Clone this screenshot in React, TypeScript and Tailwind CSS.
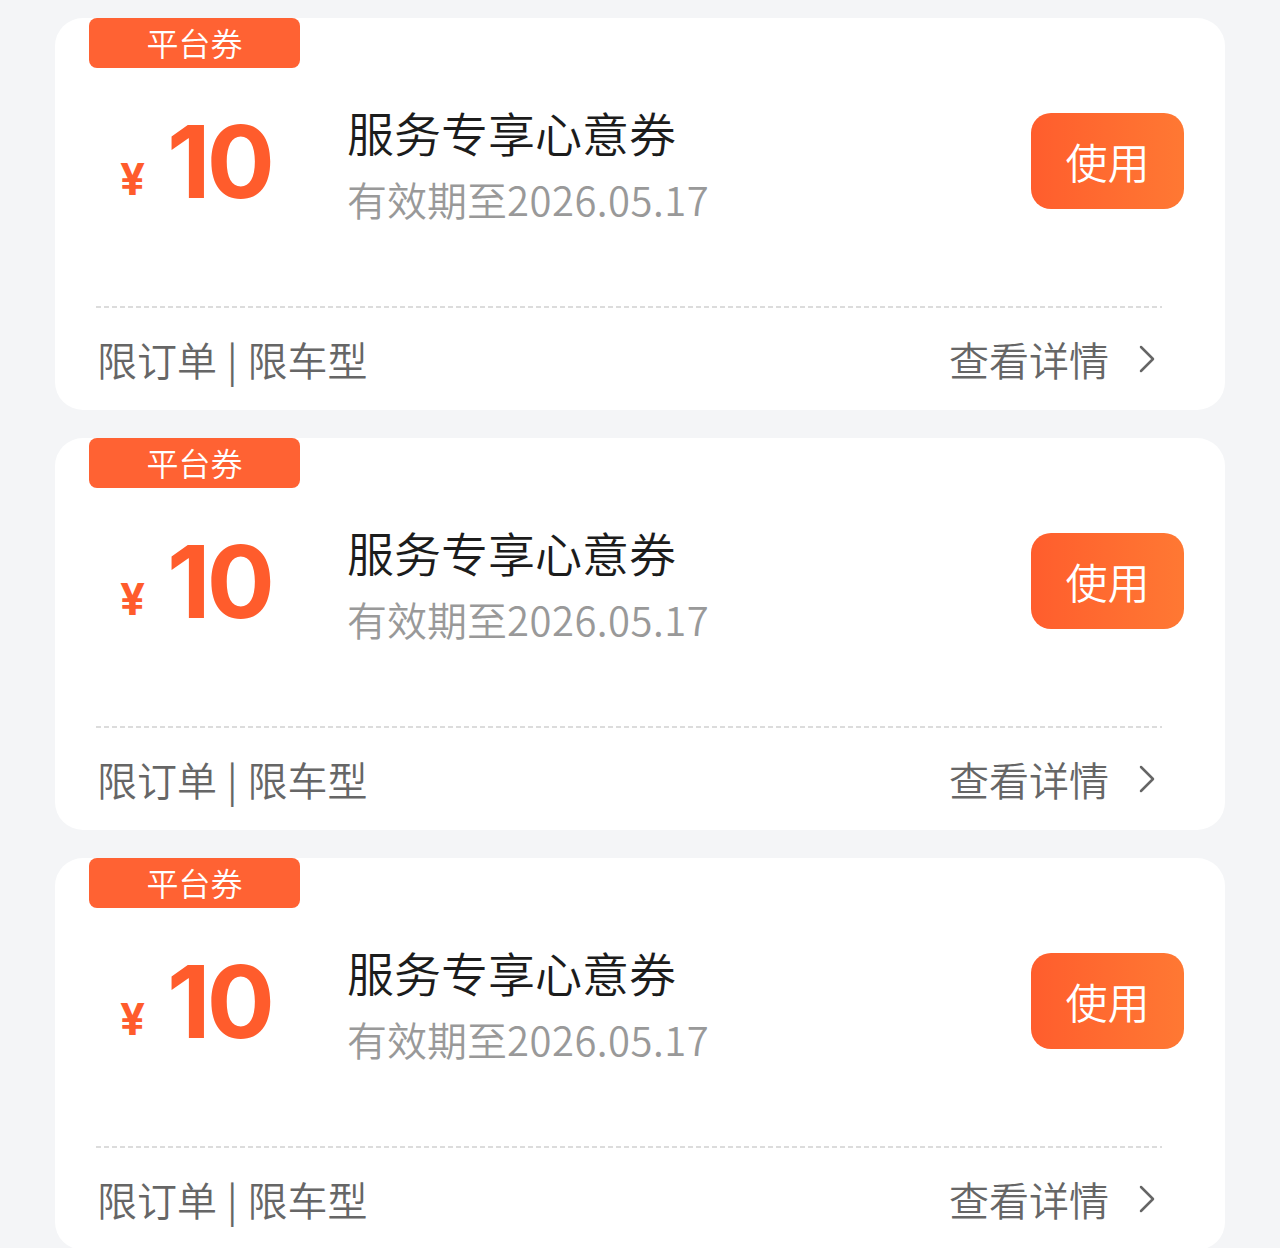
import React from "react";

const cjk = { fontFamily: '"Noto Sans CJK SC", "Noto Sans", sans-serif' };

function Coupon() {
  return (
    <div className="relative h-[392px] w-full shrink-0 rounded-[28px] bg-white" style={cjk}>
      <div className="ml-[34px] flex h-[50px] w-[211px] items-center justify-center rounded-[8px] bg-[#ff6233] pb-[2px] text-[32px] font-[350] leading-none text-white">
        平台券
      </div>
      <div className="flex h-[238px] items-start">
        <div className="ml-[65px] mt-[43px] flex w-[227px] items-baseline">
          <span
            className="relative bottom-[3px] text-[44px] font-bold leading-none text-[#ff5c2c]"
            style={{ fontFamily: '"Inter", "Liberation Sans", sans-serif' }}
          >
            ¥
          </span>
          <span
            className="ml-[22px] text-[101px] font-bold leading-none tracking-[-4px] text-[#ff5c2c]"
            style={{ fontFamily: '"Inter", "Liberation Sans", sans-serif' }}
          >
            10
          </span>
        </div>
        <div className="mt-[40px] flex flex-col">
          <div className="text-[47px] font-[350] leading-none text-[#1c1c1c]">服务专享心意券</div>
          <div className="mt-[24px] text-[40px] font-[350] leading-none text-[#999999]">
            有效期至<span className="tracking-[0.5px]">2026.05.17</span>
          </div>
        </div>
        <button className="ml-auto mr-[41px] mt-[45px] flex h-[96px] w-[153px] items-center justify-center rounded-[20px] bg-gradient-to-r from-[#ff5d2d] to-[#ff7833] text-[42px] font-[350] leading-none text-white">
          使用
        </button>
      </div>
      <div className="ml-[41px] mr-[63px] h-[2px] bg-[repeating-linear-gradient(to_right,#dcdcdc_0,#dcdcdc_5px,transparent_5px,transparent_8px)]" />
      <div className="flex h-[102px] items-center justify-between pl-[42px] pr-[70px]">
        <div className="text-[40px] font-[350] leading-none text-[#666666]">
          限订单<span className="mx-[10px]">|</span>限车型
        </div>
        <div className="flex items-center text-[40px] font-[350] leading-none text-[#666666]">
          <span>查看详情</span>
          <svg className="ml-[30px]" width="16" height="28" viewBox="0 0 16 28" fill="none">
            <path d="M2 2 L14 14 L2 26" stroke="#666666" strokeWidth="2.5" strokeLinecap="round" strokeLinejoin="round" />
          </svg>
        </div>
      </div>
    </div>
  );
}

export default function App() {
  return (
    <div className="flex h-[1248px] w-[1280px] flex-col gap-[28px] overflow-hidden bg-[#f4f5f7] px-[55px] pt-[18px]">
      <Coupon />
      <Coupon />
      <Coupon />
    </div>
  );
}
